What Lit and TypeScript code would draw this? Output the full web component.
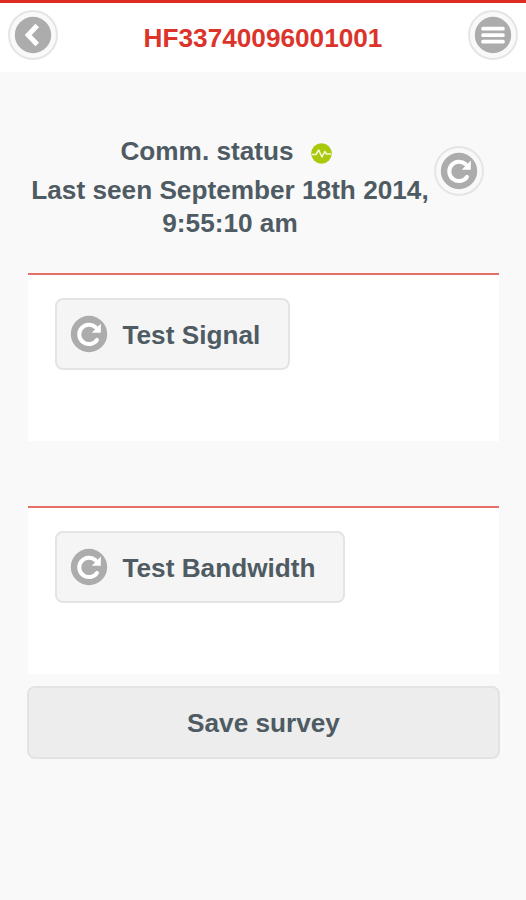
import { LitElement, html, css, svg } from "lit";
import { customElement, property } from "lit/decorators.js";

const glyphs = {
  back: svg`<path d="M22.2 8.6 L13.2 18 L22.2 27.4" fill="none" stroke="#fff" stroke-width="5"/>`,
  menu: svg`<path d="M8 11.7H28M8 18.2H28M8 24.7H28" fill="none" stroke="#fff" stroke-width="3.7" stroke-linecap="round"/>`,
  refresh: svg`<path d="M24.6 11.3 A9.7 9.7 0 1 0 26 23.8" fill="none" stroke="#fff" stroke-width="4" stroke-linecap="round"/>
    <path d="M29.8 7.4 V16.8 H20.8 Z" fill="#fff"/>`,
};

@customElement("round-icon")
class RoundIcon extends LitElement {
  @property() name: keyof typeof glyphs = "refresh";
  @property({ type: Boolean, reflect: true }) ringed = false;

  static styles = css`
    :host {
      display: flex;
      flex: none;
      box-sizing: border-box;
    }
    :host([ringed]) {
      padding: 5px;
      border: 2px solid #e5e5e5;
      border-radius: 50%;
      background: #f9f9f9;
    }
    svg {
      display: block;
      width: 36px;
      height: 36px;
      overflow: visible;
    }
  `;

  render() {
    return html`<svg viewBox="0 0 36 36">
      <circle cx="18" cy="18" r="18.2" fill="#acacac" />
      ${glyphs[this.name]}
    </svg>`;
  }
}

@customElement("test-panel")
class TestPanel extends LitElement {
  @property() label = "";

  static styles = css`
    :host {
      display: block;
      box-sizing: border-box;
      height: 168px;
      border-top: 2px solid #e5706a;
      background: #fff;
      padding: 23px 27px;
    }
    button {
      display: inline-flex;
      align-items: center;
      gap: 15.5px;
      box-sizing: border-box;
      height: 72px;
      padding: 0 27.5px 0 14px;
      border: 2px solid #e4e4e4;
      border-radius: 8px;
      background: #f5f5f5;
      font: inherit;
      color: inherit;
      white-space: nowrap;
    }
    span {
      position: relative;
      top: 1px;
    }
  `;

  render() {
    return html`<button><round-icon name="refresh"></round-icon><span>${this.label}</span></button>`;
  }
}

@customElement("app-root")
class AppRoot extends LitElement {
  static styles = css`
    :host {
      display: block;
      box-sizing: border-box;
      height: 900px;
      background: #f9f9f9;
      color: #4f5b63;
      font: bold 26.2px/33px "Liberation Sans", Arial, sans-serif;
    }
    header {
      display: flex;
      justify-content: space-between;
      align-items: center;
      box-sizing: border-box;
      height: 72px;
      padding: 0 8px 5px 8px;
      border-top: 3px solid #dd2b22;
      background: #fff;
    }
    h1 {
      margin: 7px 0 0;
      font: inherit;
      color: #dc342b;
    }
    main {
      padding: 63px 26px 0 27px;
    }
    .status {
      display: flex;
      align-items: flex-start;
      height: 138px;
      padding-left: 1px;
    }
    .status round-icon {
      margin: 11px 0 0 2px;
    }
    .summary {
      flex: none;
      width: 404px;
      text-align: center;
    }
    .comm {
      display: flex;
      justify-content: center;
      align-items: center;
      gap: 17px;
      margin: 0 0 6px;
      padding-right: 8px;
    }
    .comm svg {
      width: 21px;
      height: 21px;
      margin-top: 3px;
    }
    .seen {
      margin: 0;
    }
    test-panel {
      margin: 0 1px;
    }
    test-panel + test-panel {
      margin-top: 65px;
    }
    .save {
      display: block;
      box-sizing: border-box;
      width: 100%;
      height: 73px;
      margin-top: 12px;
      padding-top: 3px;
      border: 2px solid #e3e3e3;
      border-radius: 8px;
      background: #ededed;
      font: inherit;
      color: inherit;
    }
  `;

  render() {
    return html`
      <header>
        <round-icon name="back" ringed></round-icon>
        <h1>HF33740096001001</h1>
        <round-icon name="menu" ringed></round-icon>
      </header>
      <main>
        <section class="status">
          <div class="summary">
            <p class="comm">
              Comm. status
              <svg viewBox="0 0 21 21">
                <circle cx="10.5" cy="10.5" r="10.3" fill="#a9ca0c" />
                <path
                  d="M1 11.5H5L7.7 7L11 14L13.8 8.5L15.5 11H20"
                  fill="none"
                  stroke="#f4f9d8"
                  stroke-width="1.6"
                  stroke-linejoin="round"
                />
              </svg>
            </p>
            <p class="seen">Last seen September 18th 2014,<br />9:55:10 am</p>
          </div>
          <round-icon name="refresh" ringed></round-icon>
        </section>
        <test-panel label="Test Signal"></test-panel>
        <test-panel label="Test Bandwidth"></test-panel>
        <button class="save">Save survey</button>
      </main>
    `;
  }
}
